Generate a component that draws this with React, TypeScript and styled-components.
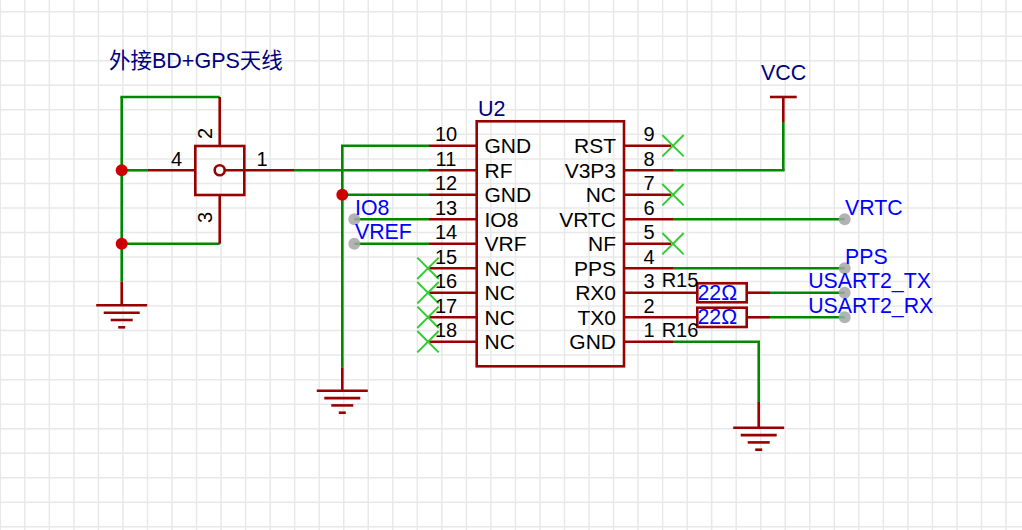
import React from 'react'
import styled, { createGlobalStyle } from 'styled-components'

const GRID = 24.53
const ROWS = [145.7, 170.3, 194.7, 219.3, 243.7, 268.3, 292.7, 317.3, 341.7]

type Seg = [number, number, number, number]

const GREEN_WIRES: Seg[] = [
    [120.4, 97, 219.7, 97],
    [121.7, 97, 121.7, 281.7],
    [121.7, 170.3, 147.3, 170.3],
    [121.7, 243.7, 219.7, 243.7],
    [294, 170.3, 429, 170.3],
    [341, 145.7, 429, 145.7],
    [342.3, 145.7, 342.3, 367.3],
    [342.3, 194.7, 429, 194.7],
    [354.3, 219.3, 429, 219.3],
    [354.3, 243.7, 429, 243.7],
    [673, 170.3, 784.6, 170.3],
    [783.3, 170.3, 783.3, 122],
    [673, 219.3, 844.7, 219.3],
    [673, 268.3, 844.7, 268.3],
    [770, 292.7, 844.7, 292.7],
    [770, 317.3, 844.7, 317.3],
    [673, 341.7, 760, 341.7],
    [758.7, 341.7, 758.7, 402],
]

const RED_WIRES: Seg[] = [
    [219.7, 97, 219.7, 146],
    [219.7, 195, 219.7, 243.7],
    [147.3, 170.3, 195.3, 170.3],
    [224.7, 170.3, 294, 170.3],
    [121.7, 281.7, 121.7, 305.3],
    [342.3, 367.3, 342.3, 390.7],
    [758.7, 402, 758.7, 427.7],
    [783.3, 122, 783.3, 97],
    [770, 97, 796.7, 97],
    [624, 145.7, 671, 145.7],
    [624, 170.3, 673, 170.3],
    [624, 194.7, 671, 194.7],
    [624, 219.3, 673, 219.3],
    [624, 243.7, 671, 243.7],
    [624, 268.3, 673, 268.3],
    [624, 292.7, 697.3, 292.7],
    [624, 317.3, 697.3, 317.3],
    [624, 341.7, 673, 341.7],
    [746.7, 292.7, 770, 292.7],
    [746.7, 317.3, 770, 317.3],
    ...ROWS.map((y): Seg => [429, y, 476.7, y]),
]

const GROUNDS: [number, number][] = [
    [121.7, 305.3],
    [342.3, 390.7],
    [758.7, 427.7],
]

const CROSSES: [number, number][] = [
    [428, 268.3],
    [428, 292.7],
    [428, 317.3],
    [428, 341.7],
    [673, 145.7],
    [673, 194.7],
    [673, 243.7],
]

const FLAGS: [number, number][] = [
    [354.3, 219.3],
    [354.3, 243.7],
    [844.7, 219.3],
    [844.7, 268.3],
    [844.7, 292.7],
    [844.7, 317.3],
]

const LEFT_PINS = ['GND', 'RF', 'GND', 'IO8', 'VRF', 'NC', 'NC', 'NC', 'NC']
const RIGHT_PINS = ['RST', 'V3P3', 'NC', 'VRTC', 'NF', 'PPS', 'RX0', 'TX0', 'GND']

const NET_LABELS: [string, number, number][] = [
    ['IO8', 355, 215],
    ['VREF', 355, 239],
    ['VRTC', 845, 215],
    ['PPS', 845, 264],
    ['USART2_TX', 808.2, 288],
    ['USART2_RX', 808.2, 312.5],
    ['22Ω', 697.5, 300],
    ['22Ω', 697.5, 324],
]

const GlobalStyle = createGlobalStyle`
    html, body {
        margin: 0;
        padding: 0;
        background: #ffffff;
    }
`

const Canvas = styled.div`
    width: 1022px;
    height: 530px;
    overflow: hidden;
    background: #ffffff;
`

const Sheet = styled.svg`
    display: block;
    font-family: "Liberation Sans", Arial, "Noto Sans CJK SC", sans-serif;
`

const GridLine = styled.line`
    stroke: #e8e8e8;
    stroke-width: 1.5;
`

const Wire = styled.line`
    stroke: #008800;
    stroke-width: 2.6;
`

const PinLine = styled.line`
    stroke: #990000;
    stroke-width: 2.6;
`

const Body = styled.rect`
    fill: none;
    stroke: #990000;
    stroke-width: 2.6;
`

const Dot = styled.circle`
    fill: #cc0000;
`

const Port = styled.circle`
    fill: #ffffff;
    stroke: #990000;
    stroke-width: 2.6;
`

const Flag = styled.circle`
    fill: #a6a6a6;
    fill-opacity: 0.85;
`

const Cross = styled.path`
    fill: none;
    stroke: #33cc33;
    stroke-width: 2;
`

const Title = styled.text`
    font-size: 21.5px;
    fill: #000080;
`

const PinNumber = styled.text`
    font-size: 20px;
    fill: #000000;
    text-anchor: middle;
`

const PinName = styled.text<{ $end?: boolean }>`
    font-size: 21px;
    fill: #000000;
    text-anchor: ${p => (p.$end ? 'end' : 'start')};
`

const NetLabel = styled.text`
    font-size: 21.3px;
    fill: #0000ff;
`

function Ground({ x, y }: { x: number; y: number }) {
    return (
        <>
            <PinLine x1={x - 25.5} y1={y} x2={x + 25.5} y2={y} />
            <PinLine x1={x - 18} y1={y + 7.4} x2={x + 18} y2={y + 7.4} />
            <PinLine x1={x - 11} y1={y + 14.7} x2={x + 11} y2={y + 14.7} />
            <PinLine x1={x - 3.5} y1={y + 22} x2={x + 3.5} y2={y + 22} />
        </>
    )
}

function App() {
    const columns = Array.from({ length: 42 }, (_, i) => i * GRID + 0.3)
    const rows = Array.from({ length: 22 }, (_, i) => i * GRID + 11.7)

    return (
        <Canvas>
            <GlobalStyle />
            <Sheet width={1022} height={530} viewBox="0 0 1022 530">
                {columns.map(x => (
                    <GridLine key={x} x1={x} y1={0} x2={x} y2={530} />
                ))}
                {rows.map(y => (
                    <GridLine key={y} x1={0} y1={y} x2={1022} y2={y} />
                ))}

                <Title x={109} y={68}>外接BD+GPS天线</Title>
                <Title x={761} y={80}>VCC</Title>
                <Title x={478} y={116}>U2</Title>

                {GREEN_WIRES.map(([x1, y1, x2, y2], i) => (
                    <Wire key={i} x1={x1} y1={y1} x2={x2} y2={y2} />
                ))}
                {RED_WIRES.map(([x1, y1, x2, y2], i) => (
                    <PinLine key={i} x1={x1} y1={y1} x2={x2} y2={y2} />
                ))}
                {GROUNDS.map(([x, y]) => (
                    <Ground key={x} x={x} y={y} />
                ))}

                <Body x={195.3} y={146} width={49} height={49} />
                <Port cx={219.7} cy={170.3} r={5} />
                <Body x={476.7} y={121.3} width={147.3} height={245} />
                <Body x={697.3} y={283.3} width={49.4} height={19} />
                <Body x={697.3} y={307.7} width={49.4} height={19.3} />

                {[[121.7, 170.3], [121.7, 243.7], [342.3, 194.7]].map(([x, y]) => (
                    <Dot key={y} cx={x} cy={y} r={6} />
                ))}
                {CROSSES.map(([x, y]) => (
                    <Cross
                        key={`${x}-${y}`}
                        d={`M${x - 10.7} ${y - 10.7}L${x + 10.7} ${y + 10.7}M${x + 10.7} ${y - 10.7}L${x - 10.7} ${y + 10.7}`}
                    />
                ))}
                {FLAGS.map(([x, y]) => (
                    <Flag key={`${x}-${y}`} cx={x} cy={y} r={6} />
                ))}

                <PinNumber x={176.5} y={165.8}>4</PinNumber>
                <PinNumber x={262} y={165.8}>1</PinNumber>
                <PinNumber transform="translate(212 133.5) rotate(-90)">2</PinNumber>
                <PinNumber transform="translate(212 217.5) rotate(-90)">3</PinNumber>

                {ROWS.map((y, i) => (
                    <React.Fragment key={y}>
                        <PinNumber x={446} y={y - 4.6}>{i + 10}</PinNumber>
                        <PinNumber x={649} y={y - 4.6}>{9 - i}</PinNumber>
                        <PinName x={484.5} y={y + 7.3}>{LEFT_PINS[i]}</PinName>
                        <PinName $end x={616} y={y + 7.3}>{RIGHT_PINS[i]}</PinName>
                    </React.Fragment>
                ))}
                <PinNumber x={680} y={287.3}>R15</PinNumber>
                <PinNumber x={680} y={336.7}>R16</PinNumber>

                {NET_LABELS.map(([text, x, y]) => (
                    <NetLabel key={`${text}-${y}`} x={x} y={y}>{text}</NetLabel>
                ))}
            </Sheet>
        </Canvas>
    )
}

export default App
